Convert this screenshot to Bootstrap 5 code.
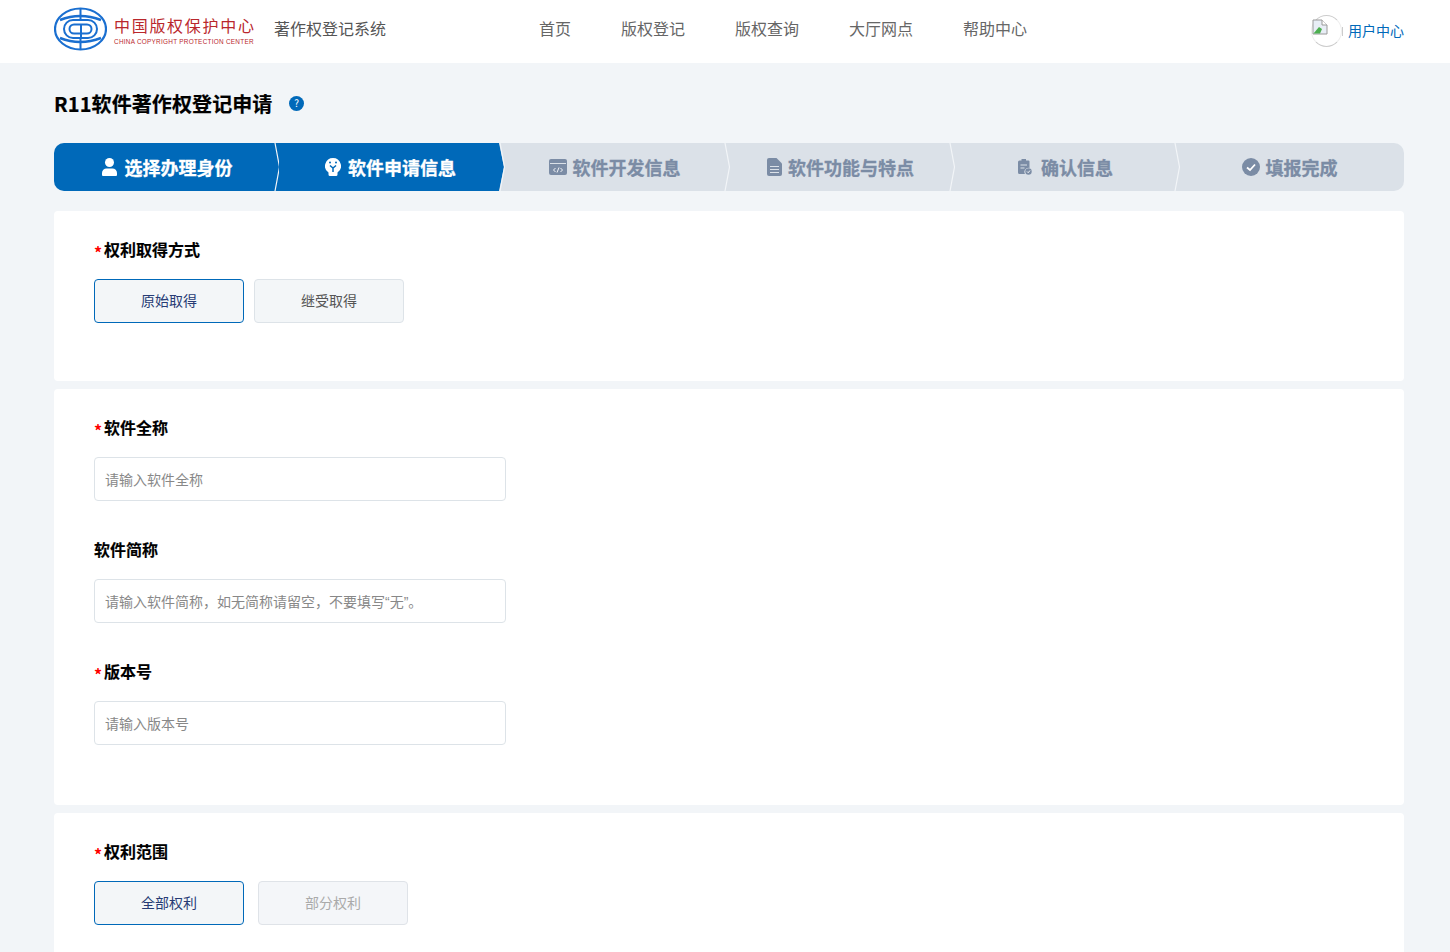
<!DOCTYPE html>
<html lang="zh-CN">
<head>
  <meta charset="UTF-8">
  <meta name="viewport" content="width=device-width, initial-scale=1.0">
  <title>R11软件著作权登记申请</title>
  <link href="https://cdn.jsdelivr.net/npm/bootstrap@5.3.7/dist/css/bootstrap.min.css" rel="stylesheet">
  <script src="https://cdn.jsdelivr.net/npm/bootstrap@5.3.7/dist/js/bootstrap.bundle.min.js"></script>
  <style>
    body { background: #f2f5f8; font-family: "Noto Sans CJK SC", "Noto Sans", sans-serif; color: #000; }
    .page-wrap { width: 1350px; margin-left: 54px; }
    .top-bar { height: 63px; background: #fff; }
    .top-inner { padding-bottom: 8px; }
    .logo-mark { margin-top: 2px; }
    .logo-text { width: 141px; margin-left: 7px; margin-top: 6px; color: #b9272c; line-height: 1; }
    .logo-cn { font-size: 16px; letter-spacing: 1.7px; white-space: nowrap; height: 23px; padding-top: 1px; }
    .logo-en { font-family: "Liberation Sans", sans-serif; font-size: 6.4px; white-space: nowrap; letter-spacing: .27px; }
    .sys-name { margin-left: 19px; font-size: 16px; color: #555; }
    .main-nav { margin-left: 153px; gap: 50px; }
    .main-nav a { font-size: 16px; color: #666; text-decoration: none; }
    .user-box { font-size: 14px; color: #0069b9; padding-top: 5px; }
    .user-pic { width: 31px; height: 32px; margin-top: 1px; border-radius: 50%; border: 1px solid #eee; border-top-color: #ccc; border-bottom-color: #ccc; }
    .user-pic svg { margin: 3px 0 0 0; display: block; }
    .user-sep { width: 1px; height: 9px; background: #ccc; margin: 3px 5px 0 0; }
    .page-title { height: 80px; }
    .page-title h1 { font-size: 20px; font-weight: 700; margin: 0; padding-top: 2px; line-height: 1.5; letter-spacing: .1px; -webkit-text-stroke: .2px #000; }
    .help-mark { margin-left: 17px; }
    .step-strip { height: 48px; background: #dbe1e8; border-radius: 10px; overflow: hidden; }
    .step-item { width: 225px; position: relative; padding-right: 2px; font-size: 18px; font-weight: 700; color: #7b8ca5; gap: 6px; -webkit-text-stroke: .3px currentColor; }
    .step-item.nudge { padding-right: 4px; }
    .step-item > span, .step-item > .step-ico { position: relative; }
    .step-item.on { color: #fff; background: #0069b9; padding: 0 0 0 1px; gap: 8px; }
    .step-item.cur { color: #fff; gap: 7px; }
    .step-item.cur::before { content: ""; position: absolute; inset: 0; background: #0069b9; clip-path: polygon(0 0, calc(100% - 5px) 0, 100% 50%, calc(100% - 5px) 100%, 0 100%); }
    .step-line { position: absolute; top: 0; right: -2px; }
    .wide-ico { margin-right: 3px; }
    .form-block { background: #fff; border-radius: 4px; margin-bottom: 8px; padding: 26px 40px 22px; }
    .form-block.tall { padding-bottom: 24px; }
    .form-block:first-of-type { margin-top: 20px; }
    .field-row { margin-bottom: 36px; }
    .field-title { font-size: 16px; font-weight: 700; line-height: 24px; margin-bottom: 18px; display: block; -webkit-text-stroke: .15px #000; }
    .req { color: #f00; font-weight: 700; font-size: 16px; line-height: 1; display: inline-block; width: 10px; vertical-align: -3px; -webkit-text-stroke: 0; }
    .opt-gap { gap: 10px; }
    .scope-gap { gap: 14px; }
    .opt-btn { width: 150px; height: 44px; font-size: 14px; color: #555; background: #f3f6f8; border: 1px solid #dde3e8; border-radius: 4px; padding: 0 0 2px; }
    .opt-btn:hover { background: #f3f6f8; border-color: #dde3e8; color: #555; }
    .opt-btn.picked, .opt-btn.picked:hover { border-color: #0069b9; color: #273c75; }
    .opt-btn:disabled { background: #f4f6f9; border-color: #dfe3e8; color: #aaa; opacity: 1; }
    .txt-input { width: 412px; height: 44px; font-family: "Liberation Sans", "Noto Sans CJK SC", sans-serif; font-size: 14px; border: 1px solid #dde3e8; border-radius: 4px; padding: 2px 10px 0; }
    .txt-input::placeholder { color: #888; }
  </style>
</head>
<body>
  <header class="top-bar">
    <div class="page-wrap top-inner h-100 d-flex align-items-center">
      <svg width="53" height="44" viewBox="0 0 53 44" class="flex-shrink-0 logo-mark">
        <ellipse cx="26.5" cy="22" rx="25.5" ry="20.5" fill="none" stroke="#1a6fd0" stroke-width="2.200"/>
        <path d="M6 13Q26 5 47 13M6 31Q26 39 47 31" fill="none" stroke="#1a6fd0" stroke-width="2.600"/>
        <path d="M26.500 2V13M26.500 31V42" fill="none" stroke="#1a6fd0" stroke-width="2"/>
        <rect x="10" y="13" width="33" height="18" rx="9" fill="#fff" stroke="#1a6fd0" stroke-width="2"/>
        <path d="M26 17.500H20a4.500 4.500 0 0 0 0 9H33a4.500 4.500 0 0 0 0-9H27V31" fill="none" stroke="#1a6fd0" stroke-width="2"/>
      </svg>
      <div class="logo-text flex-shrink-0">
        <div class="logo-cn">中国版权保护中心</div>
        <div class="logo-en">CHINA COPYRIGHT PROTECTION CENTER</div>
      </div>
      <div class="sys-name flex-shrink-0">著作权登记系统</div>
      <nav class="main-nav d-flex">
        <a href="#">首页</a>
        <a href="#">版权登记</a>
        <a href="#">版权查询</a>
        <a href="#">大厅网点</a>
        <a href="#">帮助中心</a>
      </nav>
      <div class="user-box ms-auto d-flex align-items-center">
        <div class="user-pic">
          <svg width="16" height="16" viewBox="0 0 16 16">
            <path d="M1 1H10L15 6V15H1Z" fill="#e8eef6" stroke="#9a9a9a"/>
            <path d="M1.500 14.500L7 8L10 10L8 14.500Z" fill="#4caf50"/>
            <path d="M10 1V6H15" fill="#fff" stroke="#9a9a9a"/>
          </svg>
        </div>
        <div class="user-sep"></div>
        <span>用户中心</span>
      </div>
    </div>
  </header>

  <main class="page-wrap">
    <div class="page-title d-flex align-items-center">
      <h1>R11软件著作权登记申请</h1>
      <svg class="help-mark" width="15" height="15" viewBox="0 0 15 15">
        <circle cx="7.500" cy="7.500" r="7.500" fill="#0069b9"/>
        <text x="7.500" y="11" text-anchor="middle" font-size="10" fill="#fff">?</text>
      </svg>
    </div>

    <div class="step-strip d-flex">
      <div class="step-item on d-flex align-items-center justify-content-center">
        <svg class="step-ico" width="15" height="18" viewBox="0 0 15 18"><circle cx="7.500" cy="4.500" r="4.500" fill="#fff"/><path d="M0 17V15a4.500 4.500 0 0 1 4.500-4.500H10.500a4.500 4.500 0 0 1 4.500 4.500V17a1 1 0 0 1-1 1H1a1 1 0 0 1-1-1Z" fill="#fff"/></svg>
        <span>选择办理身份</span>
        <svg class="step-line" width="7" height="48" viewBox="0 0 7 48"><path d="M1 0L5.500 24L1 48" fill="none" stroke="#f2f5f8" stroke-width="1.200"/></svg>
      </div>
      <div class="step-item cur d-flex align-items-center justify-content-center">
        <svg class="step-ico" width="16" height="18" viewBox="0 0 16 18"><path d="M8 0a8 8 0 0 1 4.500 14.600V16.500a1.500 1.500 0 0 1-1.500 1.500H5a1.500 1.500 0 0 1-1.500-1.500V14.600A8 8 0 0 1 8 0Z" fill="#fff"/><path d="M5 7.500L8 10L11 7.500M8 10V14" fill="none" stroke="#0069b9" stroke-width="1.500"/><circle cx="5" cy="4.500" r="1" fill="#0069b9"/><circle cx="11" cy="4.500" r="1" fill="#0069b9"/></svg>
        <span>软件申请信息</span>
        <svg class="step-line" width="7" height="48" viewBox="0 0 7 48"><path d="M1 0L5.500 24L1 48" fill="none" stroke="#f2f5f8" stroke-width="1.200"/></svg>
      </div>
      <div class="step-item nudge d-flex align-items-center justify-content-center">
        <svg class="step-ico" width="18" height="18" viewBox="0 0 18 18"><path d="M2 1H16a2 2 0 0 1 2 2V15a2 2 0 0 1-2 2H2a2 2 0 0 1-2-2V3A2 2 0 0 1 2 1Z" fill="#7b8ca5"/><path d="M1 5.500H17" stroke="#dbe1e8"/><path d="M6.500 10L4.500 12L6.500 14M11.500 10L13.500 12L11.500 14M10 9.500L8 14.500" fill="none" stroke="#fff" stroke-width=".9"/></svg>
        <span>软件开发信息</span>
        <svg class="step-line" width="7" height="48" viewBox="0 0 7 48"><path d="M1 0L5.500 24L1 48" fill="none" stroke="#f2f5f8" stroke-width="1.200"/></svg>
      </div>
      <div class="step-item d-flex align-items-center justify-content-center">
        <svg class="step-ico" width="15" height="18" viewBox="0 0 15 18"><path d="M2 0H9.500L15 5.500V16a2 2 0 0 1-2 2H2a2 2 0 0 1-2-2V2A2 2 0 0 1 2 0Z" fill="#7b8ca5"/><path d="M3 8.500H12M3 11.500H12M3 14.500H12" stroke="#dbe1e8" stroke-width="1.200"/></svg>
        <span>软件功能与特点</span>
        <svg class="step-line" width="7" height="48" viewBox="0 0 7 48"><path d="M1 0L5.500 24L1 48" fill="none" stroke="#f2f5f8" stroke-width="1.200"/></svg>
      </div>
      <div class="step-item d-flex align-items-center justify-content-center">
        <svg class="step-ico wide-ico" width="14" height="16" viewBox="0 0 14 16"><path d="M1.500 1.500H3.500V0H8V1.500H10.500A1 1 0 0 1 11.500 2.500V9A4 4 0 0 0 7 15H1.500A1.500 1.500 0 0 1 0 13.500V3A1.500 1.500 0 0 1 1.500 1.500Z" fill="#7b8ca5"/><path d="M2.500 6H9M2.500 9H6.500" stroke="#dbe1e8"/><circle cx="10.500" cy="12.500" r="3.200" fill="#7b8ca5"/><path d="M9 12.500L10.200 13.700L12 11.500" fill="none" stroke="#fff" stroke-width=".9"/></svg>
        <span>确认信息</span>
        <svg class="step-line" width="7" height="48" viewBox="0 0 7 48"><path d="M1 0L5.500 24L1 48" fill="none" stroke="#f2f5f8" stroke-width="1.200"/></svg>
      </div>
      <div class="step-item nudge d-flex align-items-center justify-content-center">
        <svg class="step-ico" width="18" height="18" viewBox="0 0 18 18"><circle cx="9" cy="9" r="9" fill="#7b8ca5"/><path d="M5 9.500L8 12L13 6.500" fill="none" stroke="#fff" stroke-width="1.800"/></svg>
        <span>填报完成</span>
      </div>
    </div>

    <section class="form-block">
      <div class="field-row">
        <label class="field-title"><span class="req">*</span>权利取得方式</label>
        <div class="d-flex opt-gap">
          <button type="button" class="btn opt-btn picked">原始取得</button>
          <button type="button" class="btn opt-btn">继受取得</button>
        </div>
      </div>
    </section>

    <section class="form-block tall">
      <div class="field-row">
        <label class="field-title" for="softName"><span class="req">*</span>软件全称</label>
        <input type="text" id="softName" class="form-control txt-input" placeholder="请输入软件全称">
      </div>
      <div class="field-row">
        <label class="field-title" for="softShort">软件简称</label>
        <input type="text" id="softShort" class="form-control txt-input" placeholder="请输入软件简称，如无简称请留空，不要填写“无”。">
      </div>
      <div class="field-row">
        <label class="field-title" for="softVer"><span class="req">*</span>版本号</label>
        <input type="text" id="softVer" class="form-control txt-input" placeholder="请输入版本号">
      </div>
    </section>

    <section class="form-block">
      <div class="field-row">
        <label class="field-title"><span class="req">*</span>权利范围</label>
        <div class="d-flex scope-gap">
          <button type="button" class="btn opt-btn picked">全部权利</button>
          <button type="button" class="btn opt-btn" disabled>部分权利</button>
        </div>
      </div>
    </section>
  </main>
</body>
</html>
